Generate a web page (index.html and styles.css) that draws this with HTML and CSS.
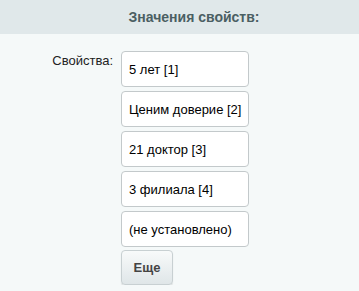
FILE: index.html
```html
<!DOCTYPE html>
<html lang="ru">
<head>
<meta charset="utf-8">
<link rel="stylesheet" href="styles.css">
</head>
<body>
<div class="header">Значения свойств:</div>
<div class="content">
  <div class="label">Свойства:</div>
  <div class="values">
    <div class="item">5 лет [1]</div>
    <div class="item">Ценим доверие [2]</div>
    <div class="item">21 доктор [3]</div>
    <div class="item">3 филиала [4]</div>
    <div class="item">(не установлено)</div>
    <button class="more">Еще</button>
  </div>
</div>
</body>
</html>
```
FILE: styles.css
```css
html, body {
  margin: 0;
  padding: 0;
  background: #f5f9f9;
  font-family: "Liberation Sans", Arial, sans-serif;
  font-size: 13px;
  color: #000;
}
.header {
  height: 34px;
  line-height: 34px;
  background: #e0e8ea;
  color: #4b5f63;
  font-weight: bold;
  font-size: 14px;
  text-align: center;
  padding-left: 29px;
}
.content {
  display: flex;
  padding-top: 17px;
}
.label {
  width: 113px;
  text-align: right;
  padding-top: 2px;
  padding-right: 8px;
  box-sizing: border-box;
  width: 121px;
  color: #222;
}
.values {
  display: flex;
  flex-direction: column;
  gap: 4px;
  align-items: flex-start;
}
.item {
  box-sizing: border-box;
  width: 128px;
  height: 36px;
  background: #fff;
  border: 1px solid #c3c9cb;
  border-radius: 4px;
  padding: 0 7px;
  display: flex;
  align-items: center;
  white-space: nowrap;
  color: #000;
}
.more {
  box-sizing: border-box;
  width: 52px;
  height: 35px;
  margin-top: -1px;
  border: 1px solid #c8d0d2;
  border-radius: 4px;
  background: linear-gradient(#f8fafa, #dfe6e8);
  box-shadow: 0 1px 1px rgba(0,0,0,0.12);
  font-family: "Liberation Sans", Arial, sans-serif;
  font-weight: bold;
  font-size: 13px;
  color: #444;
  padding: 0;
}
```
